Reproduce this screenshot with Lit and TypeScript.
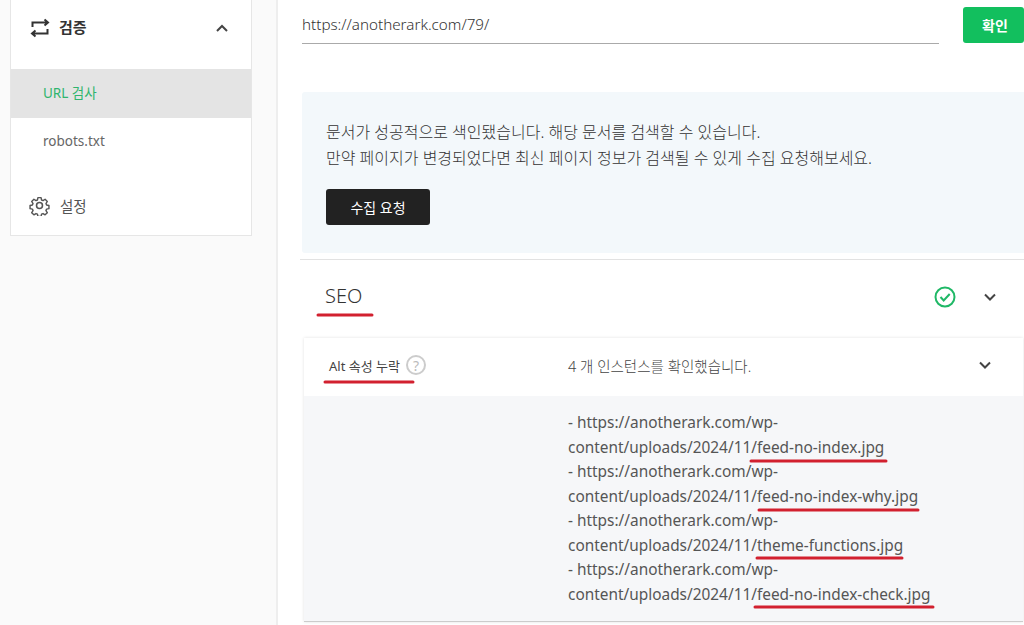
import { css, html, LitElement, svg } from 'lit';
import { customElement } from 'lit/decorators.js';

const files = ['feed-no-index.jpg', 'feed-no-index-why.jpg', 'theme-functions.jpg', 'feed-no-index-check.jpg'];

// hand-drawn red marks on top of the screenshot: [x1, x2, y]
const marks = [
  [318, 372, 315],
  [325, 413, 382],
  [751, 886, 461],
  [759, 918, 510],
  [757, 902, 558],
  [755, 933, 607],
];

const chevron = (up = false) => html`
  <svg class="chev" width="14" height="14" viewBox="0 0 14 14" fill="none" stroke="currentColor" stroke-width="2">
    <path d=${up ? 'M2 10l5-5 5 5' : 'M2 4.5l5 5 5-5'}></path>
  </svg>
`;

@customElement('app-root')
export class AppRoot extends LitElement {
  render() {
    return html`
      <aside>
        <nav class="panel">
          <div class="group">
            <svg width="20" height="20" viewBox="0 0 20 20" fill="none" stroke="#333" stroke-width="2">
              <path d="M2.5 9V4.5H17M14.5 1.5l3.5 3-3.5 3"></path>
              <path d="M17.5 11v4.500H3M5.500 12.500l-3.500 3 3.500 3"></path>
            </svg>
            <span class="group-label">검증</span>
            ${chevron(true)}
          </div>
          <div class="item active">URL 검사</div>
          <div class="item">robots.txt</div>
          <div class="settings">
            <svg width="21" height="21" viewBox="0 0 24 24" fill="none" stroke="#555" stroke-width="1.800" stroke-linejoin="round">
              <circle cx="12" cy="12" r="3.400"></circle>
              <path d="M10 2h4l.6 3 1.900.8 2.600-1.700 2.800 2.800-1.700 2.600.8 1.900 3 .6v4l-3 .6-.8 1.900 1.700 2.600-2.800 2.800-2.600-1.700-1.900.8-.6 3h-4l-.6-3-1.900-.8-2.600 1.700-2.800-2.800 1.700-2.600-.8-1.900-3-.6v-4l3-.6.8-1.900-1.700-2.600 2.800-2.800 2.600 1.700 1.900-.8z" transform="translate(1.200 1.200) scale(.9)"></path>
            </svg>
            <span>설정</span>
          </div>
        </nav>
      </aside>
      <main>
        <div class="url-row">
          <div class="url">https://anotherark.com/79/</div>
          <button class="ok">확인</button>
        </div>
        <section class="notice">
          <p>문서가 성공적으로 색인됐습니다. 해당 문서를 검색할 수 있습니다.<br />만약 페이지가 변경되었다면 최신 페이지 정보가 검색될 수 있게 수집 요청해보세요.</p>
          <button class="req">수집 요청</button>
        </section>
        <div class="seo">
          <h2>SEO</h2>
          <svg class="check" width="22" height="22" viewBox="0 0 22 22" fill="none" stroke="#1fb866" stroke-width="2">
            <circle cx="11" cy="11" r="9.500"></circle>
            <path d="M6.500 11l3.200 3.500 6-6.500"></path>
          </svg>
          ${chevron()}
        </div>
        <section class="card">
          <div class="card-head">
            <div class="audit">
              <span>Alt 속성 누락</span>
              <span class="help">?</span>
            </div>
            <div class="count">4 개 인스턴스를 확인했습니다.</div>
            ${chevron()}
          </div>
          <div class="detail">
            <div class="list">
              ${files.map(
                f => html`
                  <div>- https://anotherark.com/wp-</div>
                  <div>content/uploads/2024/11/${f}</div>
                `,
              )}
            </div>
          </div>
        </section>
      </main>
      <svg class="marks" width="1024" height="625" viewBox="0 0 1024 625">
        ${marks.map(([a, b, y]) => svg`<line x1=${a} x2=${b} y1=${y} y2=${y}></line>`)}
      </svg>
    `;
  }

  static styles = css`
    :host {
      display: flex;
      position: relative;
      width: 1024px;
      height: 625px;
      overflow: hidden;
      background: #fff;
      color: #333;
      font-family: 'Noto Sans', 'Noto Sans CJK KR', sans-serif;
      font-size: 14px;
    }
    aside {
      flex: none;
      box-sizing: border-box;
      width: 278px;
      height: 625px;
      padding-left: 10px;
      background: #fafafa;
      border-right: 2px solid #eee;
    }
    .panel {
      box-sizing: border-box;
      width: 242px;
      height: 236px;
      background: #fff;
      border: 1px solid #e6e6e6;
      border-top: 0;
    }
    .group {
      display: flex;
      align-items: center;
      height: 69px;
      padding: 0 22px 14px 19px;
      box-sizing: border-box;
      gap: 9px;
    }
    .group-label {
      flex: 1;
      font-size: 15px;
      font-weight: 700;
      margin-bottom: 2px;
    }
    .chev {
      flex: none;
      color: #444;
    }
    .item {
      display: flex;
      align-items: center;
      box-sizing: border-box;
      height: 49px;
      padding: 0 0 4px 32px;
      font-size: 13.500px;
      color: #666;
    }
    .item.active {
      background: #e4e4e4;
      color: #2fb56e;
    }
    .settings {
      display: flex;
      align-items: center;
      gap: 10px;
      padding: 28px 0 0 18px;
      font-size: 14.500px;
      color: #555;
    }
    main {
      flex: 1;
      min-width: 0;
      padding-left: 22px;
    }
    .url-row {
      display: flex;
      align-items: flex-end;
      gap: 24px;
      height: 44px;
      padding-left: 2px;
    }
    .url {
      box-sizing: border-box;
      flex: none;
      width: 637px;
      height: 44px;
      padding-top: 12px;
      border-bottom: 1px solid #aaa;
      font-size: 15.200px;
      font-weight: 300;
      line-height: 24px;
      color: #333;
    }
    button {
      border: 0;
      font-family: inherit;
      color: #fff;
    }
    .ok {
      width: 70px;
      height: 36px;
      margin-bottom: 1px;
      border-radius: 3px;
      background: #12bf5e;
      font-size: 14px;
      font-weight: 700;
      text-align: left;
      padding-left: 19px;
    }
    .notice {
      box-sizing: border-box;
      height: 161px;
      margin: 48px 0 0 2px;
      padding: 27px 24px 0;
      border-radius: 3px 0 0 3px;
      background: #f3f8fb;
    }
    .notice p {
      margin: 0;
      font-size: 16px;
      font-weight: 300;
      line-height: 26px;
      color: #333;
    }
    .req {
      display: block;
      width: 104px;
      height: 36px;
      margin-top: 18px;
      border-radius: 3px;
      background: #222;
      font-size: 14px;
    }
    .seo {
      box-sizing: border-box;
      display: flex;
      align-items: center;
      height: 79px;
      margin-top: 6px;
      padding: 0 27px 5px 25px;
      border-top: 1px solid #e2e2e2;
    }
    .seo h2 {
      flex: 1;
      margin: 0 0 2px;
      font-size: 20px;
      font-weight: 300;
      color: #333;
    }
    .seo .chev {
      margin-left: 27px;
    }
    .card {
      margin-left: 4px;
      width: 719px;
      box-shadow: 0 0 3px rgba(0, 0, 0, 0.12);
    }
    .card-head {
      box-sizing: border-box;
      display: flex;
      align-items: center;
      height: 58px;
      padding: 0 31px 4px 25px;
    }
    .audit {
      display: flex;
      align-items: center;
      gap: 6px;
      width: 239px;
      font-size: 13px;
      color: #444;
    }
    .help {
      display: inline-flex;
      align-items: center;
      justify-content: center;
      box-sizing: border-box;
      width: 20px;
      height: 20px;
      border: 2px solid #ccc;
      border-radius: 50%;
      font-size: 14px;
      color: #bbb;
    }
    .count {
      flex: 1;
      font-size: 14.500px;
      font-weight: 300;
      color: #444;
    }
    .detail {
      box-sizing: border-box;
      height: 226px;
      padding: 15px 0 0 264px;
      background: #f6f7f9;
      border-bottom: 1px solid #ccc;
    }
    .list {
      font-size: 15.400px;
      line-height: 24.500px;
      color: #555;
    }
    .marks {
      position: absolute;
      top: 0;
      left: 0;
      pointer-events: none;
    }
    .marks line {
      stroke: #d2202f;
      stroke-width: 3;
      stroke-linecap: round;
    }
  `;
}

declare global {
  interface HTMLElementTagNameMap {
    'app-root': AppRoot;
  }
}
